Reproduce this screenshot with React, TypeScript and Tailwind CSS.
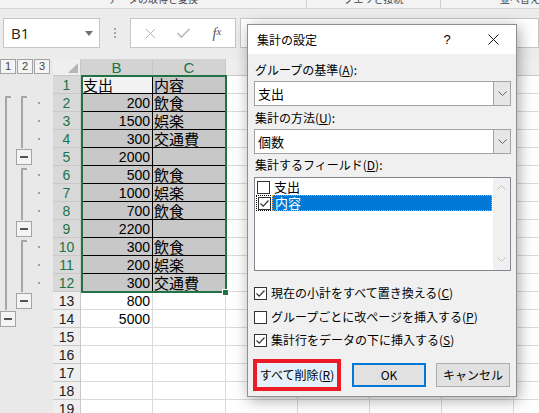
import { X, Check } from 'lucide-react';

type Row = { n: number; b?: string; c?: string; o: string };

// o: outline code per row -> [level1, level2, dot]  s=start l=line b=button d=dot
const rows: Row[] = [
  { n: 1, b: '支出', c: '内容', o: '---' },
  { n: 2, b: '200', c: '飲食', o: 'ssd' },
  { n: 3, b: '1500', c: '娯楽', o: 'lld' },
  { n: 4, b: '300', c: '交通費', o: 'lld' },
  { n: 5, b: '2000', o: 'lb-' },
  { n: 6, b: '500', c: '飲食', o: 'lsd' },
  { n: 7, b: '1000', c: '娯楽', o: 'lld' },
  { n: 8, b: '700', c: '飲食', o: 'lld' },
  { n: 9, b: '2200', o: 'lb-' },
  { n: 10, b: '300', c: '飲食', o: 'lsd' },
  { n: 11, b: '200', c: '娯楽', o: 'lld' },
  { n: 12, b: '300', c: '交通費', o: 'lld' },
  { n: 13, b: '800', o: 'lb-' },
  { n: 14, b: '5000', o: 'b--' },
  { n: 15, o: '---' },
  { n: 16, o: '---' },
  { n: 17, o: '---' },
  { n: 18, o: '---' },
  { n: 19, o: '---' },
];

const isNum = (v?: string) => !!v && /^\d+$/.test(v);

function MinusBox() {
  return (
    <div className="mt-[1px] flex h-[16px] w-[16px] items-center justify-center border border-[#a3a3a3] bg-[#f4f4f4]">
      <div className="h-[2px] w-[8px] bg-[#555]" />
    </div>
  );
}

function OutlineLevel({ kind }: { kind: string }) {
  if (kind === 's') {
    return <div className="ml-[5px] mt-[2px] h-[16px] w-[6px] border-l-2 border-t-2 border-[#a6a6a6]" />;
  }
  if (kind === 'l') {
    return <div className="ml-[5px] h-full w-[2px] bg-[#a6a6a6]" />;
  }
  if (kind === 'b') return <MinusBox />;
  return null;
}

function OutlineCell({ code }: { code: string }) {
  return (
    <div className="flex h-full w-[53px] shrink-0 bg-[#e9e9e9]">
      <div className="h-full w-[16px] shrink-0">
        <OutlineLevel kind={code[0]} />
      </div>
      <div className="h-full w-[17px] shrink-0">
        <OutlineLevel kind={code[1]} />
      </div>
      <div className="flex h-full w-[20px] shrink-0 items-center">
        {code[2] === 'd' && <div className="ml-[5px] h-[2px] w-[2px] bg-[#a0a0a0]" />}
      </div>
    </div>
  );
}

function SheetRow({ row }: { row: Row }) {
  const sel = row.n <= 12;
  const active = row.n === 1;
  const bBg = active ? 'bg-[#f2f2f2]' : sel ? 'bg-[#c8c8c8]' : 'bg-white';
  const border = sel ? 'border-black' : 'border-[#dadada]';
  return (
    <div className="flex h-[18px] leading-[16px]">
      <OutlineCell code={row.o} />
      <div
        className={`flex w-[28px] shrink-0 items-center justify-center border-b border-r border-[#c9c9c9] font-['Liberation_Sans',sans-serif] text-[14px] ${
          sel ? 'bg-[#d9d9d9] text-[#217346]' : 'bg-[#efefef] text-[#222]'
        }`}
      >
        {row.n}
      </div>
      <div
        className={`flex w-[72px] shrink-0 items-center border-b border-r ${border} ${bBg} ${
          isNum(row.b) ? 'justify-end pr-[2px] font-["Liberation_Sans",sans-serif] text-[14px]' : 'pl-[2px] text-[15px]'
        }`}
      >
        {row.b}
      </div>
      <div
        className={`flex w-[73px] shrink-0 items-center border-b border-r pl-[1px] text-[15px] ${
          sel ? 'border-b-black border-r-[#dadada] bg-[#c8c8c8]' : 'border-[#dadada] bg-white'
        }`}
      >
        {row.c}
      </div>
      <div className="w-[72px] shrink-0 border-b border-r border-[#dadada] bg-white" />
      <div className="w-[72px] shrink-0 border-b border-r border-[#dadada] bg-white" />
      <div className="w-[72px] shrink-0 border-b border-r border-[#dadada] bg-white" />
      <div className="w-[72px] shrink-0 border-b border-r border-[#dadada] bg-white" />
      <div className="w-[100px] shrink-0 border-b border-[#dadada] bg-white" />
    </div>
  );
}

function Chevron({ up = false, color = '#606060' }: { up?: boolean; color?: string }) {
  return (
    <svg width="9" height="5" viewBox="0 0 9 5">
      <path d={up ? 'M0.5 4.5 L4.5 0.5 L8.5 4.5' : 'M0.5 0.5 L4.5 4.5 L8.5 0.5'} fill="none" stroke={color} strokeWidth="1" />
    </svg>
  );
}

function Box({ checked }: { checked?: boolean }) {
  return (
    <span className="flex h-[13px] w-[13px] shrink-0 items-center justify-center border border-[#333] bg-white">
      {checked && (
        <svg width="11" height="11" viewBox="0 0 11 11">
          <path d="M1.5 5.5 L4.2 8.2 L9.5 2.5" fill="none" stroke="#333" strokeWidth="1.2" />
        </svg>
      )}
    </span>
  );
}

function Combo({ value }: { value: string }) {
  return (
    <div className="flex h-[25px] border border-[#a3a3a3] bg-white">
      <div className="flex flex-1 items-center pl-[3px] text-[13px]">{value}</div>
      <div className="flex w-[17px] items-center justify-center border-l border-[#a3a3a3] bg-[#e6e6e6]">
        <Chevron />
      </div>
    </div>
  );
}

function SubtotalDialog() {
  return (
    <div className="absolute left-[247px] top-[24px] flex h-[373px] w-[270px] flex-col border border-[#8f8f8f] bg-[#f0f0f0] text-[12px] text-black shadow-[2px_3px_14px_rgba(0,0,0,0.35)]">
      <div className="flex h-[29px] shrink-0 items-center bg-white">
        <span className="flex-1 pl-[9px] text-[12px]">集計の設定</span>
        <span className="flex w-[46px] justify-center font-['Liberation_Sans',sans-serif] text-[13px]">?</span>
        <span className="flex w-[46px] justify-center">
          <svg width="11" height="11" viewBox="0 0 11 11">
            <path d="M0.5 0.5 L10.5 10.5 M10.5 0.5 L0.5 10.5" stroke="#111" strokeWidth="1" />
          </svg>
        </span>
      </div>

      <div className="flex flex-col pl-[6px] pr-[5px]">
        <div className="mt-[8px] h-[16px] pl-[1px] leading-[16px]">
          グループの基準(<u>A</u>):
        </div>
        <div className="mt-[3px]">
          <Combo value="支出" />
        </div>
        <div className="mt-[4px] h-[16px] pl-[1px] leading-[16px]">
          集計の方法(<u>U</u>):
        </div>
        <div className="mt-[3px]">
          <Combo value="個数" />
        </div>
        <div className="mt-[3px] h-[16px] pl-[1px] leading-[16px]">
          集計するフィールド(<u>D</u>):
        </div>

        {/* field list */}
        <div className="mt-[4px] flex h-[94px] border border-[#828790] bg-white">
          <div className="flex flex-1 flex-col pl-[2px] pt-[1px] text-[13px] leading-[14px]">
            <div className="flex h-[16px] items-center">
              <Box />
              <span className="ml-[4px]">支出</span>
            </div>
            <div className="flex h-[16px] items-stretch">
              <span className="-ml-[1px] flex items-center border-y border-l border-dotted border-black pl-[1px]">
                <Box checked />
              </span>
              <span className="ml-[1px] mr-[1px] flex flex-1 items-center border border-dotted border-[#ff9a2e] bg-[#0078d7] pl-[2px] text-white">
                内容
              </span>
            </div>
          </div>
          <div className="flex w-[17px] flex-col items-center justify-between bg-[#f0f0f0] pb-[8px] pt-[7px]">
            <Chevron up color="#c2c2c2" />
            <Chevron color="#c2c2c2" />
          </div>
        </div>

        <div className="mt-[14px] flex h-[16px] items-center">
          <Box checked />
          <span className="ml-[4px]">
            現在の小計をすべて置き換える(<u>C</u>)
          </span>
        </div>
        <div className="mt-[8px] flex h-[16px] items-center">
          <Box />
          <span className="ml-[4px]">
            グループごとに改ページを挿入する(<u>P</u>)
          </span>
        </div>
        <div className="mt-[7px] flex h-[16px] items-center">
          <Box checked />
          <span className="ml-[4px]">
            集計行をデータの下に挿入する(<u>S</u>)
          </span>
        </div>

        <div className="mt-[11px] flex h-[32px] items-center">
          <div className="-ml-[1px] border-4 border-[#ed1c24]">
            <div className="flex h-[24px] w-[80px] items-center justify-center bg-[#e5f1fb]">
              すべて削除(<u>R</u>)
            </div>
          </div>
          <div className="ml-[11px] flex h-[24px] w-[74px] items-center justify-center border-2 border-[#0078d7] bg-[#e1e1e1]">
            OK
          </div>
          <div className="ml-[10px] flex h-[24px] w-[74px] items-center justify-center border border-[#adadad] bg-[#e1e1e1]">
            キャンセル
          </div>
        </div>
      </div>
    </div>
  );
}

export default function App() {
  return (
    <div className="relative h-[413px] w-[539px] overflow-hidden bg-[#ececec] font-['Noto_Sans_CJK_JP',sans-serif] text-black">
      {/* ribbon group labels (cut off) */}
      <div className="flex h-[9px] overflow-hidden border-b border-[#d6d6d6] bg-[#f3f3f3] text-[10px] leading-[12px] text-[#444]">
        <div className="flex w-[307px] shrink-0 justify-center border-r border-[#cfcfcf]">
          <span className="-mt-[7px]">データの取得と変換</span>
        </div>
        <div className="flex w-[134px] shrink-0 justify-center border-r border-[#cfcfcf]">
          <span className="-mt-[7px]">クエリと接続</span>
        </div>
        <div className="shrink-0 pl-[59px]">
          <span className="-mt-[7px] block">並べ替えとフィルター</span>
        </div>
      </div>

      {/* formula bar */}
      <div className="flex h-[50px] items-start pt-[9px]">
        <div className="ml-[3px] flex h-[30px] w-[97px] shrink-0 items-center justify-between border border-[#c6c6c6] bg-white pl-[7px] pr-[6px]">
          <span className="font-['Open_Sans',sans-serif] text-[15px] text-[#222]">B1</span>
          <svg width="8" height="5" viewBox="0 0 8 5">
            <path d="M0 0 L8 0 L4 5 Z" fill="#707070" />
          </svg>
        </div>
        <div className="flex h-[30px] w-[30px] shrink-0 flex-col items-center justify-center gap-[2px]">
          <div className="h-[2px] w-[2px] bg-[#a8a8a8]" />
          <div className="h-[2px] w-[2px] bg-[#a8a8a8]" />
          <div className="h-[2px] w-[2px] bg-[#a8a8a8]" />
        </div>
        <div className="flex h-[30px] w-[106px] shrink-0 items-center border border-[#c6c6c6] bg-white pl-[3px]">
          <span className="flex w-[32px] justify-center">
            <X size={17} strokeWidth={1.4} color="#b4b4b4" />
          </span>
          <span className="flex w-[34px] justify-center">
            <Check size={17} strokeWidth={2.4} color="#bdbdbd" />
          </span>
          <span className="flex w-[34px] justify-center font-['Liberation_Serif',serif] text-[14px] italic text-[#555]">
            f<span className="text-[11px]">x</span>
          </span>
        </div>
        <div className="ml-[4px] h-[30px] flex-1 border border-[#c6c6c6] bg-white" />
      </div>

      {/* sheet */}
      <div className="flex flex-col">
        <div className="flex h-[17px] leading-[15px]">
          <div className="flex w-[53px] shrink-0 gap-[1px] bg-[#e9e9e9]">
            {['1', '2', '3'].map((l) => (
              <div
                key={l}
                className="flex h-[15px] w-[16px] items-center justify-center border border-[#a3a3a3] bg-[#f4f4f4] font-['Liberation_Sans',sans-serif] text-[11px] text-[#444]"
              >
                {l}
              </div>
            ))}
          </div>
          <div className="flex w-[28px] shrink-0 items-end justify-end border-b border-r border-[#c9c9c9] bg-[#efefef] pb-[2px] pr-[2px]">
            <svg width="10" height="10" viewBox="0 0 10 10">
              <path d="M10 0 L10 10 L0 10 Z" fill="#b5b5b5" />
            </svg>
          </div>
          <div className="flex w-[72px] shrink-0 items-center justify-center border-b border-r border-[#c9c9c9] bg-[#d3d3d3] font-['Liberation_Sans',sans-serif] text-[15px] text-[#217346]">
            B
          </div>
          <div className="flex w-[73px] shrink-0 items-center justify-center border-b border-r border-[#c9c9c9] bg-[#d3d3d3] font-['Liberation_Sans',sans-serif] text-[15px] text-[#217346]">
            C
          </div>
          <div className="w-[72px] shrink-0 border-b border-r border-[#c9c9c9] bg-[#efefef]" />
          <div className="w-[72px] shrink-0 border-b border-r border-[#c9c9c9] bg-[#efefef]" />
          <div className="w-[72px] shrink-0 border-b border-r border-[#c9c9c9] bg-[#efefef]" />
          <div className="w-[72px] shrink-0 border-b border-r border-[#c9c9c9] bg-[#efefef]" />
          <div className="w-[100px] shrink-0 border-b border-[#c9c9c9] bg-[#efefef]" />
        </div>
        {rows.map((r) => (
          <SheetRow key={r.n} row={r} />
        ))}
      </div>

      {/* selection B1:C12 */}
      <div className="absolute left-[81px] top-[75px] h-[218px] w-[146px] border-2 border-[#217346]" />
      <div className="absolute left-[222px] top-[289px] h-[7px] w-[7px] border border-white bg-[#217346]" />

      <SubtotalDialog />
    </div>
  );
}
